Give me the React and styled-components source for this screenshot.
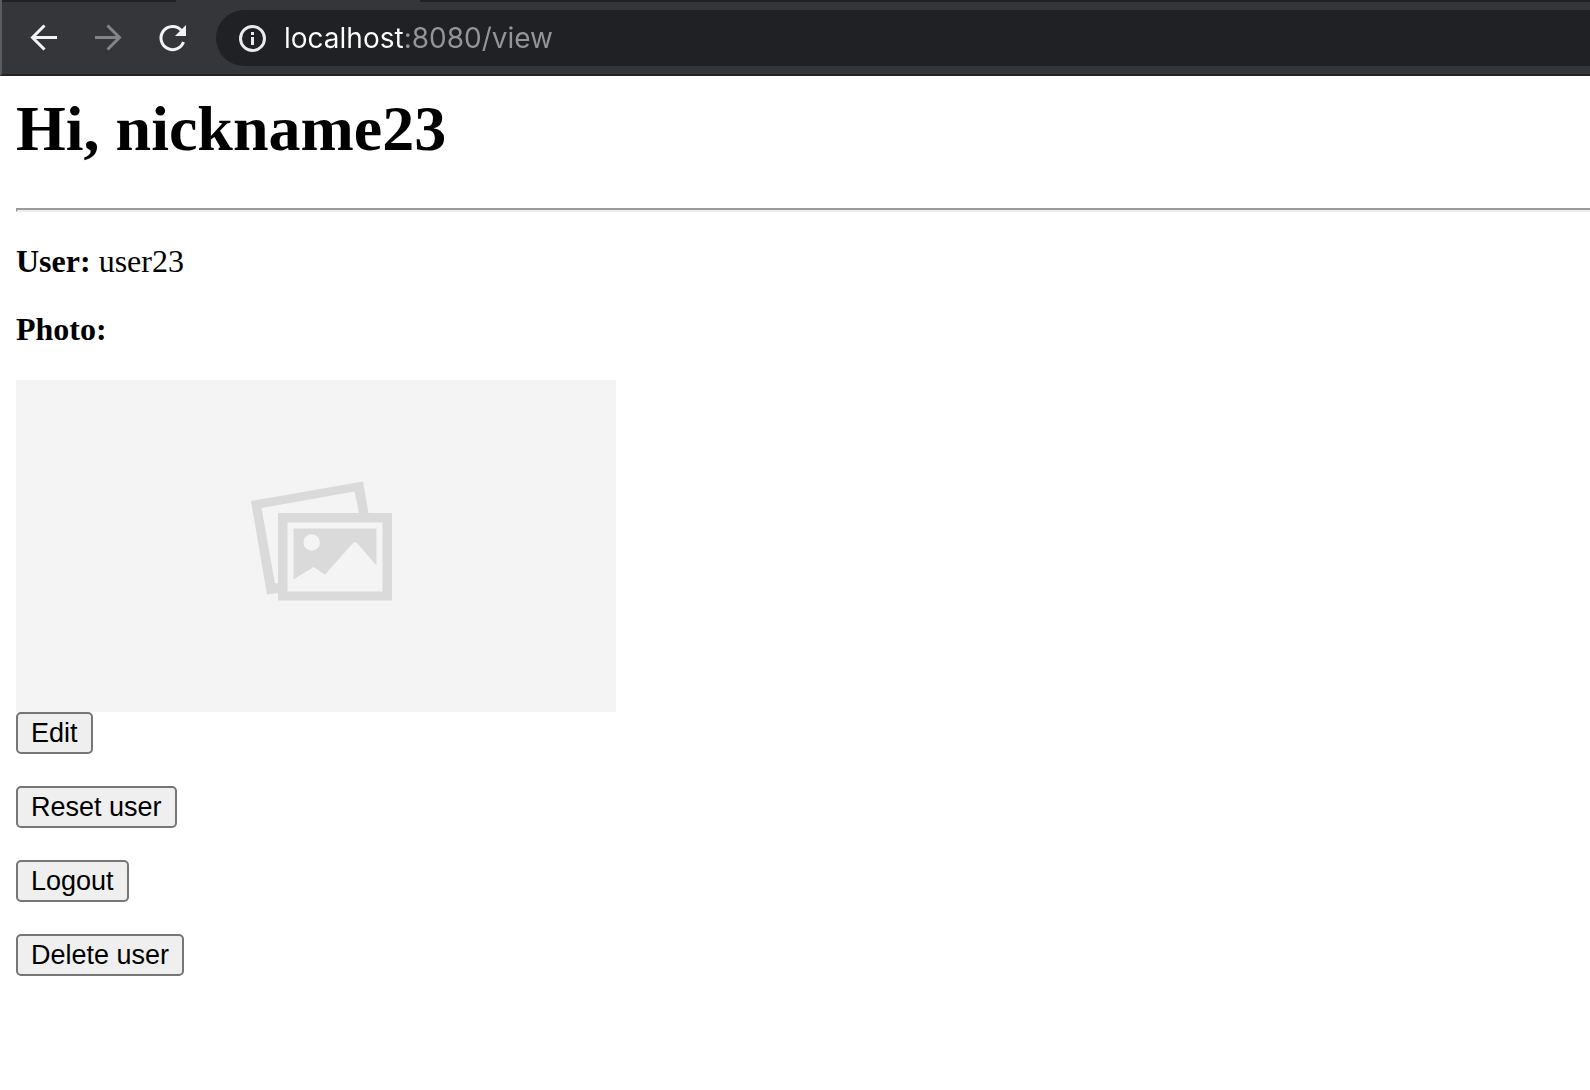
import React from "react";
import styled, { createGlobalStyle } from "styled-components";

const GlobalStyle = createGlobalStyle`
  *, *::before, *::after { box-sizing: border-box; }
  body {
    margin: 0;
    background: #fff;
    color: #000;
    font-family: "Liberation Serif", "Times New Roman", serif;
  }
`;

const Chrome = styled.header`
  border-left: 2px solid #5b5c5f;
  border-bottom: 2px solid #242226;
  background: #35363a;
`;

const TabStrip = styled.div`
  display: flex;
  gap: 244px;
  height: 2px;
`;

const InactiveTab = styled.div`
  flex: ${({ $grow }) => ($grow ? "1" : "0 0 174px")};
  background: #202124;
`;

const Toolbar = styled.nav`
  display: flex;
  align-items: center;
  gap: 24px;
  padding: 8px 0 8px 22px;
`;

const ToolButton = styled.button`
  display: flex;
  width: 40px;
  height: 40px;
  padding: 0;
  border: 0;
  background: none;
  color: ${({ disabled }) => (disabled ? "#838487" : "#f1f3f4")};
`;

const AddressBar = styled.form`
  display: flex;
  flex: 1;
  align-items: center;
  gap: 12px;
  height: 56px;
  padding-left: 16px;
  border-radius: 28px 0 0 28px;
  background: #202124;
  color: #e8eaed;
`;

const SiteInfo = styled(ToolButton)`
  color: #e8eaed;
`;

const Address = styled.input`
  flex: 1;
  min-width: 0;
  height: 42px;
  padding: 0;
  border: 0;
  outline: 0;
  background: linear-gradient(90deg, #fff 120px, #949597 120px);
  background-clip: text;
  -webkit-background-clip: text;
  -webkit-text-fill-color: transparent;
  color: #fff;
  font: 400 28px/42px Inter, sans-serif;
`;

const Page = styled.main`
  padding: 16px 0 16px 16px;
`;

const Title = styled.h1`
  margin: 0 0 42px;
  font-size: 64px;
  font-weight: 700;
  line-height: 74px;
`;

const Rule = styled.hr`
  height: 4px;
  margin: 0 0 32px;
  border: 2px solid;
  border-color: #9a9a9a #eee #eee #9a9a9a;
  border-right: 0;
`;

const Field = styled.p`
  margin: 0 0 34px;
  font-size: 32px;
  line-height: 34px;
`;

const Photo = styled.svg`
  display: block;
  width: 600px;
  max-width: 100%;
  background: #f4f4f4;
`;

const Actions = styled.div`
  display: flex;
  flex-direction: column;
  align-items: flex-start;
  gap: 32px;
`;

const ActionButton = styled.button`
  height: 42px;
  padding: 0 13px;
  border: 2px solid #767676;
  border-radius: 5px;
  background: #efefef;
  color: #000;
  font: 27px/38px "Liberation Sans", Arial, sans-serif;
`;

const Icon = ({ children }) => (
  <svg width="40" height="40" viewBox="0 0 40 40" fill="none" stroke="currentColor" strokeWidth="3" aria-hidden="true">
    {children}
  </svg>
);

export default function App() {
  return (
    <>
      <GlobalStyle />
      <Chrome>
        <TabStrip>
          <InactiveTab />
          <InactiveTab $grow />
        </TabStrip>
        <Toolbar>
          <ToolButton type="button" aria-label="Back">
            <Icon>
              <path d="M33 19.5H9M20.5 7.5L8.5 19.5L20.5 31.5" />
            </Icon>
          </ToolButton>
          <ToolButton type="button" aria-label="Forward" disabled>
            <Icon>
              <path d="M7 19.5H31M19.5 7.5L31.5 19.5L19.5 31.5" />
            </Icon>
          </ToolButton>
          <ToolButton type="button" aria-label="Reload">
            <Icon>
              <path d="M31.5 24A11.6 11.6 0 1 1 29.2 12.2" />
              <path d="M34 7V18H23Z" fill="currentColor" stroke="none" />
            </Icon>
          </ToolButton>
          <AddressBar>
            <SiteInfo type="button" aria-label="Site information">
              <Icon>
                <circle cx="20.5" cy="20.5" r="12" />
                <path d="M20.5 19V27M20.5 14V17" />
              </Icon>
            </SiteInfo>
            <Address aria-label="Address" defaultValue="localhost:8080/view" spellCheck={false} />
          </AddressBar>
        </Toolbar>
      </Chrome>
      <Page>
        <Title>Hi, nickname23</Title>
        <Rule />
        <Field>
          <b>User:</b> user23
        </Field>
        <Field>
          <b>Photo:</b>
        </Field>
        <Photo viewBox="0 0 600 332" role="img" aria-label="Photo">
          <g fill="#dadada">
            <path d="M235 121L347 101.5L352.5 133H343L338.5 111.5L245.5 128L259 203.5L262.5 203V213L251 214.5Z" />
            <path fillRule="evenodd" d="M262 133H376V220.5H262ZM271.5 142.5V211.5H366.5V142.5Z" />
            <path
              fillRule="evenodd"
              d="M277.5 148.5H360.5V185.500L341 163Q339 161 337 163L309 194.5L297.5 187L277.5 199.5ZM304 162.5A8.3 8.3 0 1 0 287.4 162.5A8.3 8.3 0 1 0 304 162.5Z"
            />
          </g>
        </Photo>
        <Actions>
          <ActionButton type="button">Edit</ActionButton>
          <ActionButton type="button">Reset user</ActionButton>
          <ActionButton type="button">Logout</ActionButton>
          <ActionButton type="button">Delete user</ActionButton>
        </Actions>
      </Page>
    </>
  );
}
